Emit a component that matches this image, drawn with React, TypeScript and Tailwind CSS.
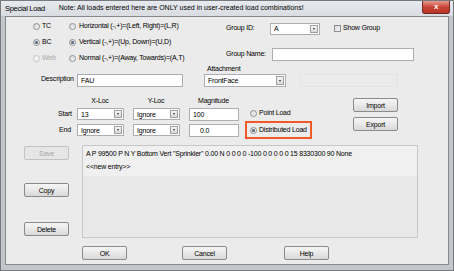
import React from "react";

const font = { fontFamily: '"Liberation Sans", Arial, sans-serif' };

function Radio({ checked = false, disabled = false }: { checked?: boolean; disabled?: boolean }) {
  return (
    <div
      className={`w-[7px] h-[7px] rounded-full border flex items-center justify-center shrink-0 ${
        disabled ? "border-[#c4c4c4] bg-[#f2f2f2]" : "border-[#8f9092] bg-gradient-to-br from-[#d6d6d6] to-[#f6f6f6]"
      }`}
    >
      {checked && <div className="w-[3px] h-[3px] rounded-full bg-[#4d6680]" />}
    </div>
  );
}

function Arrow({ h = "h-[8px]" }: { h?: string }) {
  return (
    <div className={`w-[8px] ${h} border border-[#a0a0a0] bg-gradient-to-b from-[#f4f4f4] to-[#dadada] flex items-center justify-center`}>
      <div className="w-0 h-0 border-l-[1.5px] border-r-[1.5px] border-t-[2px] border-l-transparent border-r-transparent border-t-[#333]" />
    </div>
  );
}

function Combo({ value, w }: { value: string; w: string }) {
  return (
    <div className={`${w} h-[12px] border border-[#abadb3] bg-white flex items-center justify-between pl-[3px] pr-[1px]`}>
      <span className="leading-none">{value}</span>
      <Arrow />
    </div>
  );
}

function Btn({ label, w = "w-[45px]", disabled = false }: { label: string; w?: string; disabled?: boolean }) {
  return (
    <div
      className={`${w} h-[14px] rounded-[2px] border flex items-center justify-center leading-none ${
        disabled
          ? "border-[#c2c2c2] bg-[#e6e6e6] text-[#a6a6a6]"
          : "border-[#8a8a8a] bg-gradient-to-b from-[#f5f5f5] via-[#e9e9e9] to-[#d8d8d8] text-black"
      }`}
    >
      {label}
    </div>
  );
}

function TextBox({ value = "", w, className = "" }: { value?: string; w: string; className?: string }) {
  return (
    <div className={`${w} h-[13px] border border-[#abadb3] bg-white flex items-center pl-[3px] leading-none ${className}`}>
      {value}
    </div>
  );
}

export default function App() {
  return (
    <div style={font} className="w-[454px] h-[271px] bg-[#b7bbc0] border border-[#76797d] flex flex-col text-[7px] tracking-[-0.2px] text-black overflow-hidden">
      {/* Title bar */}
      <div className="h-[15px] shrink-0 bg-gradient-to-b from-[#e6e9ed] to-[#d9dde2] flex items-center relative">
        <span className="ml-[4px] text-[7.5px] tracking-[-0.3px]">Special Load</span>
        <span className="ml-[14px] text-[7px] tracking-normal">Note: All loads entered here are ONLY used in user-created load combinations!</span>
        <div className="absolute right-[3px] top-0 w-[28px] h-[13px] rounded-b-[3px] border border-t-0 border-[#6e2b25] bg-gradient-to-b from-[#e39a8e] via-[#c84536] to-[#b93325] flex items-center justify-center text-white text-[8px] font-bold leading-none">
          x
        </div>
      </div>
      {/* Body */}
      <div className="flex-1 flex px-[4px] pb-[5px] bg-[#c3c7cb]">
        <div className="flex-1 border border-[#85888c] bg-[#ebebeb] flex flex-col">
          {/* Block 1: radios + group */}
          <div className="flex mt-[1px] h-[48px] shrink-0">
            <div className="ml-[27px] w-[36px] flex flex-col">
              <div className="h-[17px] flex items-center gap-[2px]"><Radio /><span>TC</span></div>
              <div className="h-[18px] flex items-center gap-[2px]"><Radio checked /><span>BC</span></div>
              <div className="h-[16px] flex items-center gap-[2px] text-[#a8a8a8]"><Radio disabled /><span>Web</span></div>
            </div>
            <div className="w-[157px] flex flex-col">
              <div className="h-[17px] flex items-center gap-[3px]"><Radio /><span>Horizontal (-,+)=(Left, Right)=(L,R)</span></div>
              <div className="h-[18px] flex items-center gap-[3px]"><Radio checked /><span>Vertical (-,+)=(Up, Down)=(U,D)</span></div>
              <div className="h-[16px] flex items-center gap-[3px]"><Radio /><span>Normal (-,+)=(Away, Towards)=(A,T)</span></div>
            </div>
            <div className="flex flex-col mt-[2px]">
              <div className="h-[17px] flex items-center">
                <span className="w-[44px]">Group ID:</span>
                <Combo value="A" w="w-[50px]" />
                <div className="ml-[14px] flex items-center gap-[2px]">
                  <div className="w-[7px] h-[7px] border border-[#8f9092] bg-gradient-to-br from-[#dcdcdc] to-[#f6f6f6]" />
                  <span>Show Group</span>
                </div>
              </div>
              <div className="mt-[12px] h-[10px] flex items-center">
                <span className="w-[46px]">Group Name:</span>
                <TextBox w="w-[142px]" className="h-[10px]" />
              </div>
            </div>
          </div>
          {/* Block 2: description / attachment */}
          <div className="flex items-end h-[21px] shrink-0">
            <span className="ml-[35px] w-[36px] mb-[3px]">Description</span>
            <TextBox value="FAU" w="w-[106px]" />
            <div className="ml-[21px] flex flex-col">
              <span className="ml-[3px] mb-[2px] leading-[7px]">Attachment</span>
              <div className="w-[82px] h-[13px] border border-[#abadb3] bg-white flex items-center justify-between pl-[3px] pr-[1px]">
                <span className="leading-none">FrontFace</span>
                <Arrow h="h-[9px]" />
              </div>
            </div>
            <div className="ml-[14px] w-[98px] h-[13px] border border-[#e4e4e4]" />
          </div>
          {/* Block 3: locations */}
          <div className="flex mt-[10px] h-[42px] shrink-0">
            <div className="flex flex-col">
              <div className="flex h-[8px] items-center">
                <span className="ml-[71px] w-[46px] text-center">X-Loc</span>
                <span className="ml-[10px] w-[46px] text-center">Y-Loc</span>
                <span className="ml-[10px] w-[49px] text-center">Magnitude</span>
              </div>
              <div className="flex items-center mt-[3px] h-[12px]">
                <span className="ml-[52px] w-[19px]">Start</span>
                <Combo value="13" w="w-[47px]" />
                <div className="ml-[9px]"><Combo value="Ignore" w="w-[47px]" /></div>
                <TextBox value="100" w="w-[50px]" className="ml-[9px] h-[12px]" />
              </div>
              <div className="flex items-center mt-[4px] h-[12px]">
                <span className="ml-[53px] w-[18px]">End</span>
                <Combo value="Ignore" w="w-[47px]" />
                <div className="ml-[9px]"><Combo value="Ignore" w="w-[47px]" /></div>
                <TextBox value="0.0" w="w-[50px]" className="ml-[9px] h-[12px] pl-[10px]" />
              </div>
            </div>
            <div className="flex flex-col ml-[6px] mt-[10px]">
              <div className="h-[12px] flex items-center gap-[2px] ml-[5px] whitespace-nowrap"><Radio /><span>Point Load</span></div>
              <div className="mt-[2px] w-[67px] h-[18px] border-2 border-[#f05a24] flex items-center gap-[2px] pl-[3px] whitespace-nowrap">
                <Radio checked /><span>Distributed Load</span>
              </div>
            </div>
            <div className="flex flex-col ml-[41px] mt-[1px] gap-[5px]">
              <Btn label="Import" />
              <Btn label="Export" />
            </div>
          </div>
          {/* Block 4: list */}
          <div className="flex mt-[6px] shrink-0">
            <div className="ml-[18px] flex flex-col">
              <div className="mt-[1px]"><Btn label="Save" disabled /></div>
              <div className="mt-[23px]"><Btn label="Copy" /></div>
              <div className="mt-[25px]"><Btn label="Delete" /></div>
            </div>
            <div className="ml-[13px] w-[336px] h-[93px] border border-[#c7c7c7] bg-[#e9e9e9] flex flex-col">
              <div className="bg-[#f0f0f0] pt-[3px] pb-[4px] pl-[3px] flex flex-col gap-[2px]">
                <span className="whitespace-nowrap">A P 99500 P N Y Bottom Vert "Sprinkler" 0.00 N 0 0 0 0 -100 0 0 0 0 0 15 8330300 90 None</span>
                <span>&lt;&lt;new entry&gt;&gt;</span>
              </div>
            </div>
          </div>
          {/* Block 5: OK/Cancel/Help */}
          <div className="flex mt-[8px] shrink-0">
            <div className="ml-[76px]"><Btn label="OK" /></div>
            <div className="ml-[55px]"><Btn label="Cancel" /></div>
            <div className="ml-[57px]"><Btn label="Help" /></div>
          </div>
        </div>
      </div>
    </div>
  );
}
